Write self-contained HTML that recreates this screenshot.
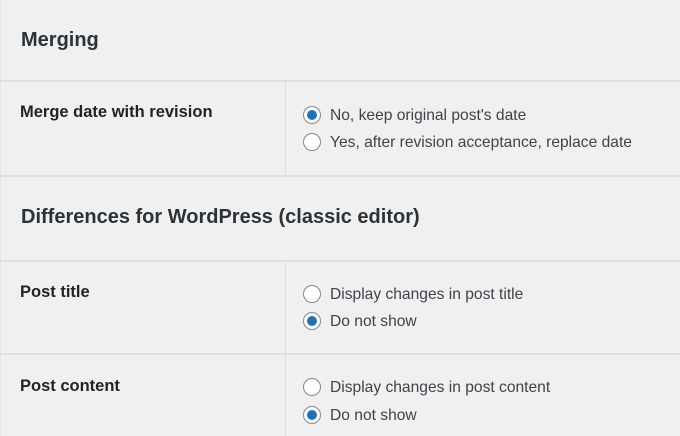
<!DOCTYPE html>
<html><head><meta charset="utf-8"><style>
html,body{margin:0;padding:0;}
body{width:680px;height:436px;background:#f0f0f1;position:relative;overflow:hidden;font-family:"Liberation Sans",sans-serif;color:#1d2327;}
.h{position:absolute;height:2px;left:0;width:680px;background:#e0e0e2;}
.v{position:absolute;width:1px;background:#dcdcde;left:285px;}
.t{position:absolute;white-space:nowrap;}
.hd{font-size:20px;font-weight:bold;color:#2c3338;left:21px;}
.lb{font-size:16.5px;font-weight:bold;left:20px;color:#1d2327;}
.op{font-size:15.6px;left:330px;color:#3c434a;}
.r{position:absolute;left:303px;width:16px;height:16px;border:1px solid #7e8993;border-radius:50%;background:#fff;}
.r.c::after{content:"";position:absolute;left:3px;top:3px;width:10px;height:10px;border-radius:50%;background:#2271b1;}
</style></head><body>
<div style="position:absolute;left:0;top:0;width:1px;height:436px;background:#e4e4e6"></div>
<div class="h" style="top:80px"></div>
<div class="h" style="top:175px"></div>
<div class="h" style="top:260px"></div>
<div class="h" style="top:353px"></div>
<div class="v" style="top:82px;height:93px"></div>
<div class="v" style="top:262px;height:91px"></div>
<div class="v" style="top:355px;height:81px"></div>

<div class="t hd" style="top:29px">Merging</div>
<div class="t lb" style="top:103px">Merge date with revision</div>
<div class="r c" style="top:106px"></div><div class="t op" style="top:107px">No, keep original post's date</div>
<div class="r" style="top:133px"></div><div class="t op" style="top:134px">Yes, after revision acceptance, replace date</div>

<div class="t hd" style="top:206px">Differences for WordPress (classic editor)</div>
<div class="t lb" style="top:283px">Post title</div>
<div class="r" style="top:285px"></div><div class="t op" style="top:286px">Display changes in post title</div>
<div class="r c" style="top:312px"></div><div class="t op" style="top:313px">Do not show</div>

<div class="t lb" style="top:377px">Post content</div>
<div class="r" style="top:378px"></div><div class="t op" style="top:379px">Display changes in post content</div>
<div class="r c" style="top:406px"></div><div class="t op" style="top:407px">Do not show</div>
</body></html>
